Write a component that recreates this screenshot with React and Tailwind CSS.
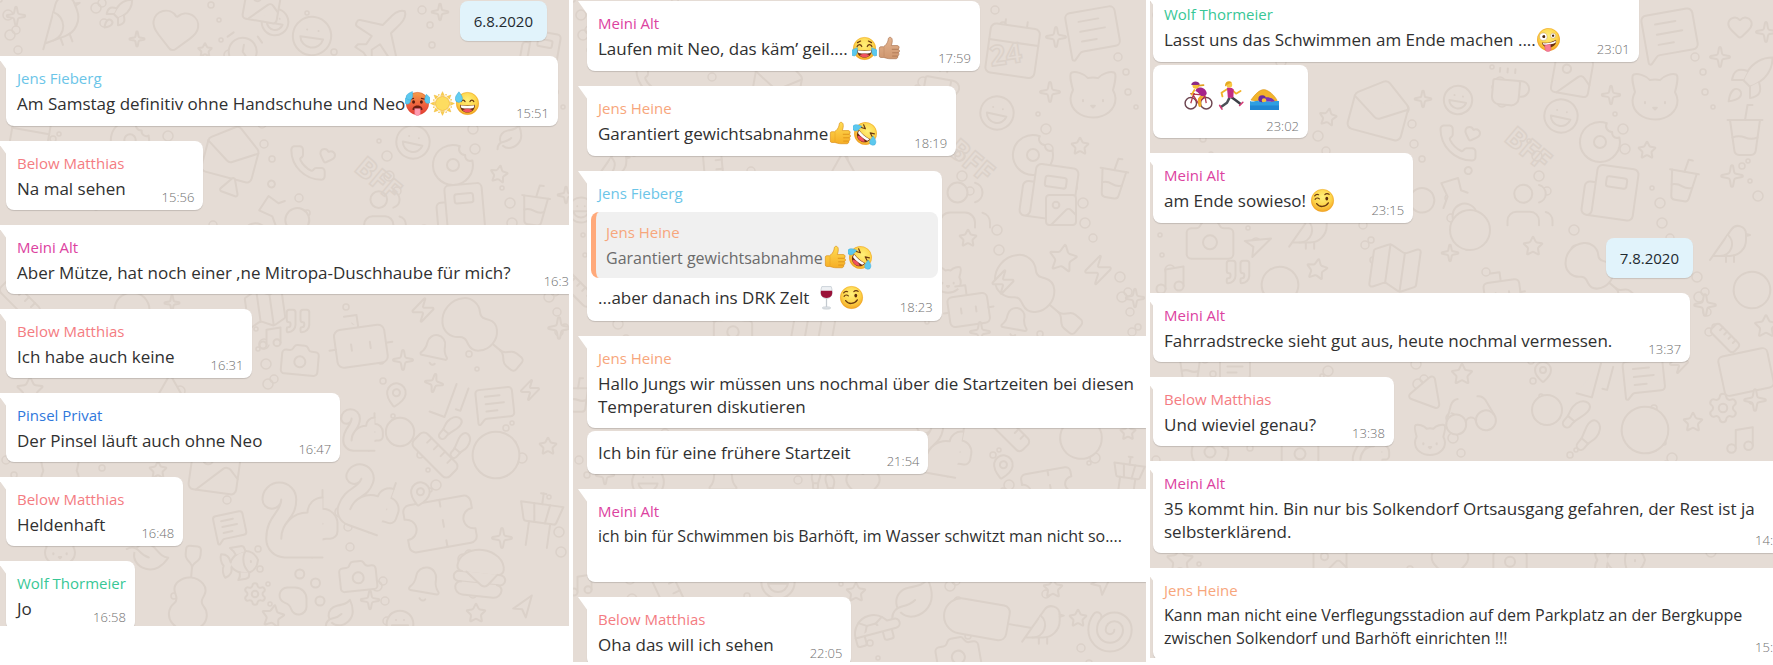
import React from 'react';
import {
  Star, Sparkle, Phone, Camera, Bell, MapPin, Guitar, Fish, PawPrint, Donut, Popsicle, Heart, Laugh,
  Mail, MailOpen, Coffee, Bike, Newspaper, Music, Quote, Zap, CheckCheck, MessageSquareText, Hamburger,
  Calendar, AlarmClock, Turtle, Plane, Triangle, CircleUserRound, Settings, Navigation, Leaf, Ticket,
  Users, Compass, Map as MapIcon, Bot, Bird, Squirrel, Volleyball, Ruler, Image as Picture, CupSoda,
  Shell, Glasses, Footprints, TowerControl, Cat, Rocket,
} from 'lucide-react';

/* ---------- wallpaper ---------- */

const wallpaperLeft = [
  [Bird, 60, 22, 60, -20], [Sparkle, 16, 16, 22, 0], [Sparkle, 137, 39, 18, 0], [Heart, 175, 30, 54, 8], [Rocket, 118, 14, 34, 0],
  [AlarmClock, 243, 50, 42, 10], [Laugh, 275, 22, 32, 10], [Picture, 262, 4, 46, 10], [Laugh, 312, 36, 46, 8],
  [Plane, 380, 36, 66, 0], [Newspaper, 540, 50, 44, 10], [Star, 205, 50, 16, 0], [Sparkle, 440, 12, 20, 0],
  [Calendar, 30, 135, 50, 10], [Donut, 130, 140, 46, 0], [Laugh, 413, 142, 40, 12], [Donut, 453, 165, 48, 0], [Star, 499, 174, 20, 10],
  [Phone, 308, 163, 40, 0], [Heart, 327, 156, 18, 20], [MailOpen, 232, 152, 62, 15], [Triangle, 231, 186, 22, 20],
  [Bike, 270, 210, 82, -20], [Newspaper, 460, 208, 56, -5], [CupSoda, 535, 205, 48, 8], [Users, 385, 210, 50, 0],
  [Sparkle, 566, 195, 20, 0], [Leaf, 510, 138, 30, 0],
  [Ruler, 20, 300, 48, 0], [Compass, 132, 310, 42, 10], [Sparkle, 172, 303, 18, 0], [MapIcon, 265, 308, 50, -8],
  [Quote, 298, 321, 30, 0], [Bot, 360, 340, 76, -8], [Zap, 423, 310, 28, 0], [Guitar, 482, 335, 92, 85],
  [Bell, 435, 350, 36, 12], [Camera, 300, 360, 44, 5], [Music, 270, 338, 28, 0], [Sparkle, 403, 360, 24, 0],
  [Sparkle, 559, 328, 26, 0], [Sparkle, 434, 383, 22, 10], [MapPin, 396, 395, 28, 10], [CheckCheck, 450, 402, 54, -25],
  [MessageSquareText, 495, 405, 44, -6], [Zap, 530, 390, 24, 0], [Volleyball, 400, 432, 34, 0], [Footprints, 455, 437, 42, 40],
  [Squirrel, 362, 430, 50, 0], [Star, 30, 390, 30, 0], [Triangle, 170, 388, 30, 0],
  [Cat, 60, 475, 50, 0], [Star, 158, 470, 20, 0], [Picture, 215, 468, 64, 8], [CircleUserRound, 496, 455, 56, 10],
  [Ruler, 435, 455, 54, 0], [Squirrel, 300, 520, 90, 0], [Squirrel, 370, 500, 74, 20], [Ticket, 440, 524, 82, -10],
  [TowerControl, 540, 520, 64, 8], [Hamburger, 480, 573, 62, 6], [Bell, 425, 584, 40, 10], [Camera, 358, 576, 44, -6],
  [PawPrint, 302, 592, 54, 0], [Settings, 255, 594, 26, 0], [Fish, 240, 563, 44, -10], [Guitar, 190, 590, 84, -40],
  [MessageSquareText, 230, 527, 36, -12], [MapPin, 420, 494, 28, 10], [Star, 548, 446, 20, 0], [Navigation, 523, 608, 26, -10],
  [Star, 476, 613, 22, 0], [Leaf, 340, 614, 34, 0], [Sparkle, 370, 600, 22, 0], [Sparkle, 502, 538, 24, 0],
  [Star, 273, 616, 26, 10], [Leaf, 148, 556, 40, 60], [Cat, 60, 550, 40, 0], [Laugh, 400, 624, 32, 0],
];

const wallpaperMiddle = [
  [Calendar, 440, 48, 66, 8], [MessageSquareText, 520, 32, 60, -10], [Cat, 520, 95, 60, 0], [Laugh, 424, 113, 40, 12],
  [Sparkle, 483, 37, 24, 0], [Sparkle, 477, 92, 24, 0], [Donut, 460, 155, 48, 0], [Star, 507, 146, 20, 0],
  [Newspaper, 476, 192, 64, 8], [CupSoda, 540, 178, 48, 10], [Users, 392, 205, 60, 0], [Coffee, 368, 86, 44, 10],
  [MailOpen, 205, 80, 56, 10], [Phone, 80, 82, 40, 0], [Bird, 40, 165, 40, 0], [Ruler, 140, 165, 52, 40], [Triangle, 270, 164, 26, 0],
  [Picture, 488, 210, 40, 0], [Star, 395, 238, 20, 0], [Star, 490, 258, 32, 10], [Cat, 375, 280, 34, 0],
  [Guitar, 465, 295, 100, 85], [Zap, 430, 282, 28, 0], [Zap, 525, 270, 34, 0], [Bot, 395, 305, 60, -8], [Bell, 442, 322, 34, 10],
  [Sparkle, 562, 298, 22, 0], [Sparkle, 407, 332, 24, 0], [Camera, 160, 330, 46, 0], [MapIcon, 240, 330, 54, 10],
  [Laugh, 8, 210, 30, 0], [Ruler, 5, 290, 40, 0], [CupSoda, 5, 395, 40, 0],
  [Ruler, 437, 432, 46, 0], [CircleUserRound, 508, 438, 50, 10], [Squirrel, 370, 446, 70, 10], [Star, 555, 432, 18, 0],
  [MapPin, 430, 467, 28, 10], [TowerControl, 555, 476, 46, 8], [Ticket, 475, 488, 60, -10], [Sparkle, 32, 475, 22, 0],
  [Footprints, 250, 482, 30, 0], [Bell, 150, 482, 36, 0], [Laugh, 75, 482, 38, 0], [Heart, 290, 484, 40, 0],
  [Music, 8, 585, 28, 0], [Ruler, 95, 590, 60, 20], [Laugh, 205, 582, 40, 0], [Star, 283, 592, 22, 0], [Leaf, 340, 600, 50, 0],
  [Turtle, 304, 628, 56, -15], [Popsicle, 413, 620, 84, -35], [Bird, 470, 625, 50, 0], [Shell, 537, 632, 52, 0],
  [Star, 505, 618, 20, 0], [Camera, 385, 655, 52, -10], [Star, 480, 588, 22, 0], [Navigation, 528, 585, 26, 0],
];

const wallpaperRight = [
  [MessageSquareText, 520, 35, 62, -10], [Heart, 590, 27, 28, 0], [Sparkle, 616, 32, 24, 0], [Sparkle, 570, 57, 24, 0],
  [Cat, 505, 97, 60, 0], [Laugh, 411, 116, 40, 12], [Donut, 450, 142, 48, 0], [Phone, 308, 143, 42, 0], [Heart, 322, 134, 18, 20],
  [MailOpen, 230, 108, 66, 15], [Coffee, 360, 88, 46, 5], [Star, 178, 117, 20, 10], [Star, 497, 150, 20, 0], [Picture, 422, 76, 50, 10],
  [Laugh, 308, 100, 34, 10], [Sparkle, 273, 99, 20, 0], [Sparkle, 461, 95, 22, 0], [Rocket, 600, 80, 54, 0], [CupSoda, 595, 130, 60, 0],
  [Bike, 300, 190, 84, 20], [Newspaper, 460, 192, 62, 8], [CupSoda, 533, 180, 50, 10], [Sparkle, 582, 176, 26, 0], [Users, 380, 205, 54, 0],
  [Camera, 60, 240, 56, 0], [Navigation, 105, 246, 30, 20], [Compass, 320, 230, 48, 0], [MapIcon, 245, 268, 62, 8], [Quote, 88, 272, 30, 0],
  [Compass, 130, 285, 44, 10], [Compass, 602, 290, 44, 10], [Star, 167, 269, 24, 10], [Sparkle, 300, 253, 20, 0], [Star, 383, 246, 22, 0],
  [Bot, 352, 290, 54, -8], [Guitar, 450, 275, 80, 85], [Bird, 580, 244, 48, 0], [Sparkle, 555, 305, 26, 0], [Star, 616, 326, 26, 0],
  [Ruler, 575, 338, 34, 0], [Music, 20, 280, 36, 0], [Bird, 160, 230, 50, 0], [MessageSquareText, 85, 368, 36, 0], [CupSoda, 40, 366, 40, 0],
  [Star, 312, 374, 24, 0], [Triangle, 278, 390, 38, 20], [MapPin, 393, 372, 24, 0], [CheckCheck, 446, 382, 54, -30],
  [MessageSquareText, 494, 378, 48, -6], [Zap, 529, 363, 24, 0], [Mail, 596, 372, 60, -12], [Glasses, 320, 415, 60, -8],
  [Volleyball, 397, 410, 36, 0], [Footprints, 432, 425, 50, 40], [CircleUserRound, 495, 430, 56, 10], [Settings, 573, 408, 34, 0],
  [Sparkle, 605, 400, 26, 0], [Star, 543, 422, 22, 0], [Music, 590, 440, 34, 0], [Cat, 280, 440, 40, 0],
  [Donut, 60, 452, 44, 0], [Camera, 150, 452, 44, 0], [Squirrel, 220, 450, 46, 0],
  [Star, 30, 560, 30, 0], [Picture, 180, 562, 44, 0], [Heart, 300, 562, 44, 0], [Camera, 360, 560, 40, 0], [Fish, 470, 560, 60, 0],
];

function Wallpaper({ doodles, words }) {
  const dots = Array.from({ length: 190 }, (_, i) => ({
    x: (i * 137 + (i % 7) * 31) % 625,
    y: (i * 89 + (i % 5) * 47) % 665,
    r: 2 + ((i * 7) % 4),
  }));
  return (
    <svg aria-hidden="true" className="absolute inset-0 h-full w-full text-[#dbd1c9]">
      {dots.map((d, i) => (
        <circle key={i} cx={d.x} cy={d.y} r={d.r} fill="none" stroke="currentColor" strokeWidth="1.5" />
      ))}
      {doodles.map(([Icon, x, y, size, turn], i) => (
        <g key={i} transform={`rotate(${turn} ${x} ${y})`}>
          <Icon x={x - size / 2} y={y - size / 2} size={size} strokeWidth={2} absoluteStrokeWidth fill="#e5dcd5" />
        </g>
      ))}
      {words.map(([word, x, y, turn]) => (
        <text key={word} x={x} y={y} transform={`rotate(${turn} ${x} ${y})`} textAnchor="middle" fill="none" stroke="currentColor" strokeWidth="1.5" fontSize="28" fontWeight="700" fontFamily="Open Sans, sans-serif">
          {word}
        </text>
      ))}
    </svg>
  );
}

/* ---------- emoji ---------- */

const Face = ({ hot }) => (
  <>
    <circle cx="16" cy="16" r="14.5" fill={hot ? 'url(#faceHot)' : 'url(#faceYellow)'} />
    <circle cx="16" cy="16" r="14.2" fill="none" stroke={hot ? '#d9482b' : '#eb9a1c'} strokeWidth=".8" opacity=".7" />
  </>
);
const Drop = ({ x, y, turn = 0 }) => (
  <path d="M0-5C3-1 4 1 4 3a4 4 0 0 1-8 0c0-2 1-4 4-8z" transform={`translate(${x} ${y}) rotate(${turn})`} fill="#5cc8ee" stroke="#3aa5d6" strokeWidth=".5" />
);
const Grin = () => (
  <>
    <path d="M6.5 17.5c6 1.6 13 1.6 19 0 .3 6-4 10-9.500 10s-9.800-4-9.500-10z" fill="#6b2d10" />
    <path d="M7.300 18.200c5.500 1.400 12 1.400 17.400 0-.2 1.800-.6 3-1.200 3.600-4.500 1-10.500 1-15 0-.7-.8-1.100-2-1.200-3.600z" fill="#fff" />
    <path d="M10 24.800c3.500-2.600 8.500-2.600 12 0-3.300 3.400-8.700 3.400-12 0z" fill="#f0525f" />
  </>
);
const ThumbShape = ({ fill, line }) => (
  <>
    <path d="M3 15.500c0-1 .7-1.800 1.800-1.800h3.600c2.600-1.600 4.600-4.200 5.500-7.200l.7-3.300c.4-2 3.900-2.200 4.700.7.700 2.800-.1 5.600-1 8.300h7.400c2.600 0 3.600 3 1.600 4.600 2 1 1.900 3.800 0 4.600 1.300 1.300.9 3.600-.9 4.200.8 1.600-.3 3.500-2.400 3.500h-7.500c-3.500 0-5.200-1-7.600-1.600H4.800C3.700 27.500 3 26.700 3 25.700z" fill={fill} stroke={line} strokeWidth=".8" />
    <path d="M19.500 17h7.500M20 21.500h7M20 25.700h6" stroke={line} strokeWidth="1" strokeLinecap="round" />
    <path d="M9 14.500v12" stroke={line} strokeWidth=".7" opacity=".5" />
  </>
);

const emojiArt = {
  hot: (
    <>
      <Face hot />
      <path d="M6.500 10.500l4.500-1M25.500 10.500l-4.500-1" stroke="#6b1f10" strokeWidth="1.500" strokeLinecap="round" />
      <ellipse cx="11" cy="14" rx="1.900" ry="2.300" fill="#5b1a0d" />
      <ellipse cx="21" cy="14" rx="1.900" ry="2.300" fill="#5b1a0d" />
      <path d="M9.500 24c0-3.500 3-5.500 6.500-5.500s6.500 2 6.500 5.500c-3 1-10 1-13 0z" fill="#6b1f10" />
      <path d="M12.300 22.500h7.400V28c0 4.500-7.400 4.500-7.400 0z" fill="#ff9bb0" stroke="#e0607c" strokeWidth=".5" />
      <Drop x={4} y={10} turn={20} /><Drop x={28.500} y={9} turn={-15} /><Drop x={7} y={5} turn={30} />
    </>
  ),
  sun: (
    <>
      {[0, 45, 90, 135, 180, 225, 270, 315].map((a) => (
        <path key={a} d="M16 .8l2.400 5h-4.800z" transform={`rotate(${a} 16 16)`} fill="#f9cf4e" stroke="#efb12f" strokeWidth=".5" />
      ))}
      {[22, 67, 112, 157, 202, 247, 292, 337].map((a) => (
        <circle key={a} cx="16" cy="4" r="1" transform={`rotate(${a} 16 16)`} fill="#f5bf3e" />
      ))}
      <circle cx="16" cy="16" r="9" fill="#fddc60" stroke="#f1b531" />
    </>
  ),
  sweat: (
    <>
      <Face /><Grin />
      <path d="M8 13.500c1-2.500 3.800-2.500 4.800 0M19.200 13.500c1-2.500 3.800-2.500 4.800 0" fill="none" stroke="#6b3a10" strokeWidth="1.600" strokeLinecap="round" />
      <path d="M5 1C8 5 9.500 7 9.500 10a4.600 4.600 0 0 1-9.200 0C.3 7 2 5 5 1z" fill="#63cdf0" stroke="#35a3d3" strokeWidth=".6" />
    </>
  ),
  joy: (
    <>
      <Face /><Grin />
      <path d="M6.500 13.500c1-3 4.800-3.500 6 0M19.500 13.500c1.200-3.500 5-3 6 0M7 8.500l4-2M25 8.500l-4-2" fill="none" stroke="#6b3a10" strokeWidth="1.500" strokeLinecap="round" />
      <Drop x={4} y={19} turn={35} /><Drop x={28} y={19} turn={-35} />
    </>
  ),
  rofl: (
    <g transform="rotate(40 16 16)">
      <Face /><Grin />
      <path d="M7 9l5 2.500-5 2M25 9l-5 2.500 5 2" fill="none" stroke="#6b3a10" strokeWidth="1.500" strokeLinecap="round" strokeLinejoin="round" />
      <Drop x={3.500} y={16} turn={35} /><Drop x={28.500} y={16} turn={-35} />
    </g>
  ),
  thumb: <ThumbShape fill="url(#handYellow)" line="#d98c14" />,
  thumbTan: <ThumbShape fill="url(#handTan)" line="#a8714d" />,
  wine: (
    <>
      <path d="M10 2h12c1.500 5 2 8 .6 11-1.200 2.800-3.600 4.200-6.600 4.200s-5.400-1.400-6.600-4.200C8 10 8.500 7 10 2z" fill="#eef1f4" stroke="#b9c0c8" strokeWidth=".8" />
      <path d="M9 7.500h14c.5 2.300.4 4-.4 5.700-1.200 2.400-3.600 3.300-6.600 3.300s-5.400-.9-6.600-3.300C8.600 11.500 8.500 9.800 9 7.500z" fill="#9a1239" />
      <path d="M16 17v11" stroke="#c3c9cf" strokeWidth="1.600" />
      <ellipse cx="16" cy="29.300" rx="5.500" ry="1.600" fill="#dde1e5" stroke="#b9c0c8" strokeWidth=".6" />
    </>
  ),
  wink: (
    <>
      <Face />
      <path d="M6.500 14.500c1.300-2 3.800-2.200 5.500-.6M6 10c1.500-1.800 3.600-2 5-1.400M19 8.500c1.500-1.800 4-1.800 5.500-.4" fill="none" stroke="#6b3a10" strokeWidth="1.500" strokeLinecap="round" />
      <ellipse cx="21.500" cy="13.500" rx="1.800" ry="2.400" fill="#5b2c0b" />
      <path d="M8.500 20c3.500 5 11 5 15-1" fill="none" stroke="#6b3a10" strokeWidth="1.700" strokeLinecap="round" />
    </>
  ),
  zany: (
    <g transform="rotate(-8 16 16)">
      <Face />
      <circle cx="10" cy="11.500" r="4.800" fill="#fff" stroke="#b98a5a" strokeWidth=".5" />
      <circle cx="10.500" cy="11.500" r="1.900" fill="#4a2508" />
      <circle cx="22.500" cy="12" r="3.200" fill="#fff" stroke="#b98a5a" strokeWidth=".5" />
      <circle cx="22.500" cy="12" r="1.500" fill="#4a2508" />
      <path d="M7 18.500c6 2 13 1.500 18.500-1 .5 5-3.500 8.800-9 8.800S7.300 23.500 7 18.500z" fill="#6b2d10" />
      <path d="M8 19.300c5.500 1.700 12 1.300 17-.8 0 1.300-.4 2.500-.8 3-5 1.500-10.500 1.700-15.200.4-.5-.6-.9-1.600-1-2.600z" fill="#fff" />
      <path d="M10 22.500h7.500V28c0 4.300-7.500 4.300-7.500 0z" fill="#f77c96" stroke="#d84e6c" strokeWidth=".5" />
    </g>
  ),
  cyclist: (
    <>
      <circle cx="7.500" cy="24.500" r="6.300" fill="none" stroke="#6d4550" strokeWidth="1.600" />
      <circle cx="24.500" cy="24.500" r="6.300" fill="none" stroke="#6d4550" strokeWidth="1.600" />
      <path d="M7.500 24.500l3-10 12.500 1 1.500 9M10.500 16l5.500 9 7-9M7 14h5" fill="none" stroke="#b4374d" strokeWidth="1.400" />
      <path d="M11.500 10l-3 5" stroke="#f2b32b" strokeWidth="2" strokeLinecap="round" />
      <path d="M21 15l-4 5 .5 7" fill="none" stroke="#efab28" strokeWidth="3.400" strokeLinecap="round" strokeLinejoin="round" />
      <path d="M14 8c4-2 10 0 11 5 .5 3-3 4-6 3.500C17 14 15 12 12.500 11z" fill="#a6238a" />
      <circle cx="13" cy="5" r="3.600" fill="#f7c03a" />
      <path d="M8 4.500C8-.3 16.500-.8 17.500 4l-3 .4z" fill="#8b2a86" />
      <path d="M16.500 5l5-.5" stroke="#e0a020" strokeWidth="2" strokeLinecap="round" />
    </>
  ),
  runner: (
    <>
      <path d="M14 18l-3 6-7 5" fill="none" stroke="#4c4f57" strokeWidth="2.800" strokeLinejoin="round" />
      <path d="M16 18l5 3.500 5 4" fill="none" stroke="#3d4047" strokeWidth="2.800" strokeLinejoin="round" />
      <path d="M3 27l2.500 4M25 27l3.500-3.500" stroke="#d23b76" strokeWidth="1.800" strokeLinecap="round" />
      <path d="M11 9l-6 4 1 4M17 10l4 4 5-3" fill="none" stroke="#f2b32b" strokeWidth="2" strokeLinecap="round" strokeLinejoin="round" />
      <path d="M11 7.500c3-1 6 0 7.500 2L18 18.500h-6z" fill="#c22d83" />
      <circle cx="13.500" cy="4" r="3.300" fill="#f9c844" />
      <path d="M9 6c-1-5 4-7.500 7.500-4.500L12 3.500z" fill="#e5a91f" />
    </>
  ),
  swimmer: (
    <>
      <path d="M1 21C6 14 11 9.500 15 9.500c5 0 12 6 15 12l-5 2-10-7-7 6z" fill="#f2b32b" stroke="#d8941c" strokeWidth=".6" />
      <circle cx="13.500" cy="20" r="4.300" fill="#6a2aa0" />
      <path d="M17 18c5-1 9 2 11 5H17z" fill="#7a35b5" />
      <circle cx="15.500" cy="21.500" r="2.500" fill="#f7c03a" />
      <path d="M0 22c4 2 6-1 9 0s5 2 8 1 6 1 8 0 4-1 7-1v10H0z" fill="#2f9fe2" />
      <path d="M0 27h32v5H0z" fill="#1878c9" opacity=".6" />
    </>
  ),
};

const emojiNames = {
  hot: 'Hot face', sun: 'Sun', sweat: 'Grinning with sweat', joy: 'Tears of joy', rofl: 'Rolling on the floor laughing',
  thumb: 'Thumbs up', thumbTan: 'Thumbs up', wine: 'Wine glass', wink: 'Winking', zany: 'Zany face',
  cyclist: 'Cyclist', runner: 'Runner', swimmer: 'Swimmer',
};

function Emoji({ name, large }) {
  return (
    <svg role="img" aria-label={emojiNames[name]} viewBox="0 0 32 32" className={large ? 'size-[29px]' : '-my-2 inline-block size-[25px] align-[2px]'}>
      {emojiArt[name]}
    </svg>
  );
}

function EmojiPaints() {
  return (
    <svg aria-hidden="true" className="absolute size-0">
      <defs>
        <radialGradient id="faceYellow" cx=".5" cy=".35" r=".65">
          <stop offset="0" stopColor="#fff07a" /><stop offset=".6" stopColor="#fdd44a" /><stop offset="1" stopColor="#f3a524" />
        </radialGradient>
        <linearGradient id="faceHot" x1="0" y1="0" x2="0" y2="1">
          <stop offset="0" stopColor="#f4a04a" /><stop offset=".5" stopColor="#f0683f" /><stop offset="1" stopColor="#e23c35" />
        </linearGradient>
        <linearGradient id="handYellow" x1="0" y1="0" x2="0" y2="1">
          <stop offset="0" stopColor="#ffdc55" /><stop offset="1" stopColor="#f6ae25" />
        </linearGradient>
        <linearGradient id="handTan" x1="0" y1="0" x2="0" y2="1">
          <stop offset="0" stopColor="#e3b491" /><stop offset="1" stopColor="#cf976f" />
        </linearGradient>
      </defs>
    </svg>
  );
}

/* ---------- chat ---------- */

const people = {
  'Jens Fieberg': 'text-[#6bc5e8]',
  'Below Matthias': 'text-[#f47c82]',
  'Meini Alt': 'text-[#dc429f]',
  'Pinsel Privat': 'text-[#2f78dc]',
  'Wolf Thormeier': 'text-[#38c796]',
  'Jens Heine': 'text-[#f7a67c]',
};

function Author({ name }) {
  return <div className={`text-[15px] leading-[22px] ${people[name]}`}>{name}</div>;
}

function Line({ text, emoji = [] }) {
  return (
    <p className={emoji.length ? 'leading-6' : 'leading-[23px]'}>
      {text}
      {emoji.map((e, i) => <Emoji key={i} name={e} />)}
    </p>
  );
}

function Tail() {
  return <span className="absolute top-0 -left-[9px] h-[14px] w-[10px] bg-white [clip-path:polygon(0_0,100%_0,100%_100%)]" />;
}

/* `open` bubbles run on to the right edge of their panel; `long` ones carry lines that need the smaller text. */
function Bubble({ author, lines = [], emoji, time, quote, large, open, long, tall, follow }) {
  const corners = open ? 'self-stretch rounded-bl-lg' : follow ? 'self-start rounded-lg pr-[9px]' : 'self-start rounded-r-lg rounded-bl-lg pr-[9px]';
  const first = lines.slice(0, -1);
  const last = lines[lines.length - 1];
  return (
    <article className={`relative whitespace-nowrap bg-white pl-[11px] text-[#303030] shadow-[0_1px_1px_rgba(0,0,0,0.15)] ${long ? 'text-base' : 'text-[17px]'} ${corners} ${follow ? 'mt-[3px] pt-[7px]' : 'mt-[15px] pt-[11px]'}`}>
      {!follow && <Tail />}
      {author && <Author name={author} />}
      {quote && (
        <blockquote className="mt-2 -mr-[5px] -ml-[7px] overflow-hidden rounded-lg border-l-[5px] border-[#ffa97a] bg-[#f0f0f0] pt-[9px] pr-3 pb-2 pl-2.5 text-base text-[#6b6b6b]">
          <Author name={quote.author} />
          <div className="mt-[3px]"><Line text={quote.text} emoji={quote.emoji} /></div>
        </blockquote>
      )}
      {large && (
        <div className="flex gap-1 px-5 pt-[9px]">
          {large.map((e) => <Emoji key={e} name={e} large />)}
        </div>
      )}
      {first.length > 0 && <div className="mt-[3px] -mb-[3px]">{first.map((l) => <Line key={l} text={l} />)}</div>}
      <div className={`flex ${large ? 'justify-end' : 'justify-between'} ${large ? '' : quote ? 'mt-2 pb-[11px]' : 'mt-[3px] pb-2.5'} ${open ? 'gap-2' : 'gap-9'}`}>
        {last && <Line text={last} emoji={emoji} />}
        {time && (
          <time className={`self-end text-[13px] font-light leading-4 text-[#707070] ${large ? 'mt-2 pb-1' : '-mb-[5px]'}`}>{time}</time>
        )}
      </div>
      {tall && <div className="h-6" />}
    </article>
  );
}

function DateChip({ children, className }) {
  return (
    <div className={`self-end rounded-lg bg-[#e1f3fb] px-3.5 text-[15px] leading-10 text-[#1f2a30] shadow-[0_1px_1px_rgba(0,0,0,0.12)] ${className}`}>{children}</div>
  );
}

function Panel({ doodles, words, className, children }) {
  return (
    <section className="relative min-w-0 overflow-hidden bg-[#e5dcd5]">
      <Wallpaper doodles={doodles} words={words} />
      <div className={`relative flex flex-col ${className}`}>{children}</div>
    </section>
  );
}

export default function App() {
  return (
    <main className="grid grid-cols-[569fr_573fr_623fr] items-start gap-1 bg-white font-['Open_Sans','Noto_Sans',sans-serif]">
      <EmojiPaints />
      <Panel doodles={wallpaperLeft} words={[['BFF', 372, 186, 40]]} className="-mb-1 pt-px pl-1.5">
        <DateChip className="mr-[22px]">6.8.2020</DateChip>
        <Bubble author="Jens Fieberg" lines={['Am Samstag definitiv ohne Handschuhe und Neo']} emoji={['hot', 'sun', 'sweat']} time="15:51" />
        <Bubble author="Below Matthias" lines={['Na mal sehen']} time="15:56" />
        <Bubble author="Meini Alt" lines={['Aber Mütze, hat noch einer ‚ne Mitropa-Duschhaube für mich?']} time="16:3" open />
        <Bubble author="Below Matthias" lines={['Ich habe auch keine']} time="16:31" />
        <Bubble author="Pinsel Privat" lines={['Der Pinsel läuft auch ohne Neo']} time="16:47" />
        <Bubble author="Below Matthias" lines={['Heldenhaft']} time="16:48" />
        <Bubble author="Wolf Thormeier" lines={['Jo']} time="16:58" />
      </Panel>
      <Panel doodles={wallpaperMiddle} words={[['24', 434, 64, -8], ['BFF', 392, 168, 40]]} className="-mt-3.5 -mb-1 pl-3.5">
        <Bubble author="Meini Alt" lines={['Laufen mit Neo, das käm’ geil.... ']} emoji={['joy', 'thumbTan']} time="17:59" />
        <Bubble author="Jens Heine" lines={['Garantiert gewichtsabnahme']} emoji={['thumb', 'rofl']} time="18:19" />
        <Bubble
          author="Jens Fieberg"
          quote={{ author: 'Jens Heine', text: 'Garantiert gewichtsabnahme', emoji: ['thumb', 'rofl'] }}
          lines={['...aber danach ins DRK Zelt ']}
          emoji={['wine', 'wink']}
          time="18:23"
        />
        <Bubble author="Jens Heine" lines={['Hallo Jungs wir müssen uns nochmal über die Startzeiten bei diesen', 'Temperaturen diskutieren']} open />
        <Bubble lines={['Ich bin für eine frühere Startzeit']} time="21:54" follow />
        <Bubble author="Meini Alt" lines={['ich bin für Schwimmen bis Barhöft, im Wasser schwitzt man nicht so....']} open long tall />
        <Bubble author="Below Matthias" lines={['Oha das will ich sehen']} time="22:05" />
      </Panel>
      <Panel doodles={wallpaperRight} words={[['BFF', 372, 156, 40]]} className="-mt-[23px] -mb-0.5 pl-[3px]">
        <Bubble author="Wolf Thormeier" lines={['Lasst uns das Schwimmen am Ende machen ....']} emoji={['zany']} time="23:01" />
        <Bubble large={['cyclist', 'runner', 'swimmer']} time="23:02" follow />
        <Bubble author="Meini Alt" lines={['am Ende sowieso! ']} emoji={['wink']} time="23:15" />
        <DateChip className="mt-[15px] mr-20">7.8.2020</DateChip>
        <Bubble author="Meini Alt" lines={['Fahrradstrecke sieht gut aus, heute nochmal vermessen.']} time="13:37" />
        <Bubble author="Below Matthias" lines={['Und wieviel genau?']} time="13:38" />
        <Bubble author="Meini Alt" lines={['35 kommt hin. Bin nur bis Solkendorf Ortsausgang gefahren, der Rest ist ja', 'selbsterklärend.']} time="14:" open />
        <Bubble author="Jens Heine" lines={['Kann man nicht eine Verflegungsstadion auf dem Parkplatz an der Bergkuppe', 'zwischen Solkendorf und Barhöft einrichten !!!']} time="15:" open long />
      </Panel>
    </main>
  );
}
